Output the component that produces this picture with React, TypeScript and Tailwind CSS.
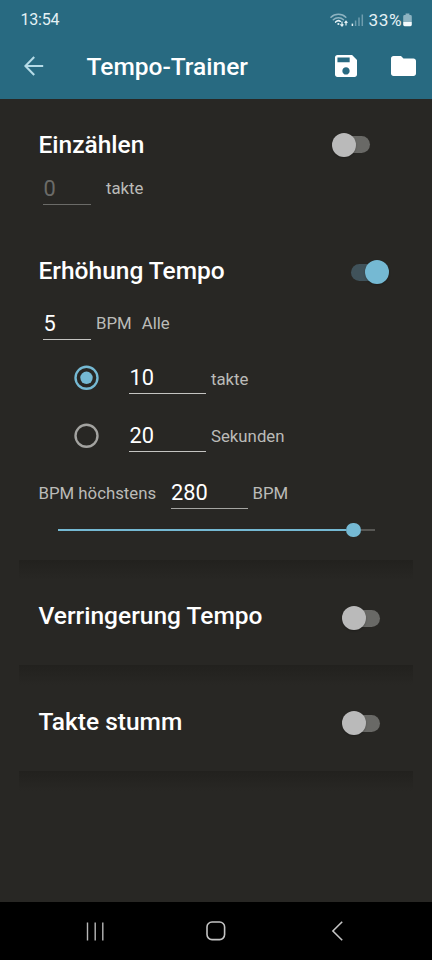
import { useState } from "react";
import { clsx } from "clsx";

function StatusBar(){
    return(
        <div className="flex h-[40px] items-center pl-[20.5px] pr-[20px] text-[#e4f1f5]">
            <span className="text-[16px] leading-5 tracking-[-0.2px]">13:54</span>
            <svg className="ml-auto" width="34" height="14" viewBox="0 0 34 14" fill="none">
                <g stroke="#8db3c1" strokeWidth="1.5" strokeLinecap="round">
                    <path d="M1 4.3C4.8 0.3 12 0.3 15.8 4.3" />
                    <path d="M3.3 6.8C6 4 10.8 4 13.5 6.8" />
                </g>
                <path d="M5.6 9.1C7.2 7.4 9.2 7.5 10.4 8.3" stroke="#e4f1f5" strokeWidth="1.5" strokeLinecap="round" />
                <circle cx="8.4" cy="11" r="1.1" fill="#e4f1f5" />
                <path d="M12 8.6V13M10.4 11.4L12 13L13.4 11.4M16 12.4V8.4M14.6 9.8L16 8.2L17.4 9.8" stroke="#e4f1f5" strokeWidth="1.2" />
                <path d="M22.4 13V10.6" stroke="#e4f1f5" strokeWidth="1.5" />
                <path d="M25.6 13V7.6M29 13V4.6M32.3 13V1.4" stroke="#6f9dae" strokeWidth="1.5" />
            </svg>
            <span className="ml-[4.5px] text-[17.2px] leading-5 tracking-[0.5px]">33%</span>
            <svg className="ml-px" width="9" height="14" viewBox="0 0 9 14">
                <path d="M2.6 0.6H6.4V2H7.4Q8.8 2 8.8 3.4V9H0.2V3.4Q0.2 2 1.6 2H2.6Z" fill="#8db3c1" />
                <path d="M0.2 9H8.8V11.8Q8.8 13.2 7.4 13.2H1.6Q0.2 13.2 0.2 11.8Z" fill="#f4fafc" />
            </svg>
        </div>
    )
}

function AppBar(){
    return(
        <div className="flex h-[59px] items-center pb-[8px] pl-[24px] pr-[16px]">
            <svg width="20" height="20" viewBox="0 0 20 20" fill="none" stroke="#b5dbe7" strokeWidth="2.1">
                <path d="M19.2 10H1.8M10.2 1L1.4 10L10.2 19" />
            </svg>
            <h1 className="ml-[42.5px] pt-[2px] text-[24.5px] font-medium leading-7 text-white">Tempo-Trainer</h1>
            <svg className="ml-auto" width="22" height="22" viewBox="3 3 18 18" fill="#fff">
                <path d="M17 3H5c-1.11 0-2 .9-2 2v14c0 1.1.89 2 2 2h14c1.1 0 2-.9 2-2V7l-4-4zm-5 16c-1.66 0-3-1.34-3-3s1.34-3 3-3 3 1.34 3 3-1.34 3-3 3zm3-10H5V5h10v4z" />
            </svg>
            <svg className="ml-[34px]" width="25" height="20" viewBox="2 4 20 16" fill="#fff">
                <path d="M10 4H4c-1.1 0-1.99.9-1.99 2L2 18c0 1.1.9 2 2 2h16c1.1 0 2-.9 2-2V8c0-1.1-.9-2-2-2h-8l-2-2z" />
            </svg>
        </div>
    )
}

function Toggle({on,onChange,className}:{on:boolean,onChange:()=>void,className?:string}){
    return(
        <button role="switch" aria-checked={on} onClick={onChange} className={clsx("relative flex h-6 w-[38.5px] items-center",on?"justify-end":"justify-start",className)}>
            <span className={clsx("absolute h-[17px] w-[34px] rounded-full",on?"left-0 bg-[#40525a]":"right-0 bg-[#696966]")}></span>
            <span className={clsx("relative size-6 rounded-full shadow-[0_1px_2px_rgba(0,0,0,0.25)]",on?"bg-[#75b9d3]":"bg-[#bababa]")}></span>
        </button>
    )
}

function NumberField({value,className}:{value:string,className:string}){
    return <input defaultValue={value} className={clsx("h-[33px] border-b bg-transparent pl-[0.5px] text-[21.8px] leading-8 outline-none",className)} />
}

function Label({text,className}:{text:string,className?:string}){
    return <span className={clsx("whitespace-nowrap text-[16.8px] leading-5 text-[#bbbbb8]",className)}>{text}</span>
}

function Title({text}:{text:string}){
    return <h2 className="-ml-[0.5px] text-[24.5px] font-medium leading-6 text-white">{text}</h2>
}

function Radio({checked,onSelect}:{checked:boolean,onSelect:()=>void}){
    return(
        <button role="radio" aria-checked={checked} onClick={onSelect} className="size-[25px]">
            <svg width="25" height="25" viewBox="0 0 25 25" fill="none">
                <circle cx="12.5" cy="12.8" r="11" stroke={checked?"#75b9d3":"#a3a3a0"} strokeWidth="2.4" />
                {checked && <circle cx="12.5" cy="12.8" r="6.2" fill="#75b9d3" />}
            </svg>
        </button>
    )
}

// soft band under a card, as wide as the card itself
function CardShadow(){
    return <div className="h-[20px] bg-linear-to-b from-[#22211e] to-[#282724]"></div>
}

export default function App(){
    const [countIn,setCountIn]=useState(false);
    const [increase,setIncrease]=useState(true);
    const [decrease,setDecrease]=useState(false);
    const [mute,setMute]=useState(false);
    const [unit,setUnit]=useState("takte");

    return(
        <div className="flex h-[960px] w-[432px] flex-col overflow-hidden bg-[#282724] font-['Roboto',sans-serif]">
            <header className="h-[99px] bg-[#286a81]">
                <StatusBar />
                <AppBar />
            </header>

            <main className="flex-1 px-[19px]">
                <section className="h-[136px] px-5 pt-[34px]">
                    <div className="flex h-6 items-center justify-between pr-[23px]">
                        <Title text="Einzählen" />
                        <Toggle on={countIn} onChange={()=>setCountIn(!countIn)} className="-mt-px" />
                    </div>
                    <div className="mt-[15px] flex items-center pl-[4px]">
                        <NumberField value="0" className="w-[48px] border-[#6b6b68] text-[#6b6b68]" />
                        <Label text="takte" className="-mt-px ml-[15px]" />
                    </div>
                </section>

                <section className="h-[325px] px-5 pt-[24px]">
                    <div className="flex h-6 items-center justify-between pr-[4px]">
                        <Title text="Erhöhung Tempo" />
                        <Toggle on={increase} onChange={()=>setIncrease(!increase)} className="mt-[2.5px]" />
                    </div>
                    <div className="mt-[24px] flex items-center pl-[4px]">
                        <NumberField value="5" className="w-[48px] border-[#c4c4c2] text-white" />
                        <Label text="BPM" className="-mt-px ml-[5px]" />
                        <Label text="Alle" className="-mt-px ml-[10px]" />
                    </div>
                    <div className="mt-[21px] flex items-center pl-[35px]">
                        <Radio checked={unit==="takte"} onSelect={()=>setUnit("takte")} />
                        <NumberField value="10" className="ml-[30px] w-[77px] border-[#c4c4c2] text-white" />
                        <Label text="takte" className="mt-[2px] ml-[5px]" />
                    </div>
                    <div className="mt-[25px] flex items-center pl-[35px]">
                        <Radio checked={unit==="sekunden"} onSelect={()=>setUnit("sekunden")} />
                        <NumberField value="20" className="ml-[30px] w-[77px] border-[#c4c4c2] text-white" />
                        <Label text="Sekunden" className="mt-px ml-[5px]" />
                    </div>
                    <div className="mt-[24px] flex items-center">
                        <Label text="BPM höchstens" className="-ml-[0.5px] w-[132px]" />
                        <NumberField value="280" className="w-[77px] border-[#a5a5a2] text-white" />
                        <Label text="BPM" className="ml-[5px]" />
                    </div>
                    <div className="mt-[13.5px] flex h-[15px] items-center pl-[18.5px] pr-[18.5px]">
                        <span className="h-[2.5px] flex-1 bg-[#75b9d3]"></span>
                        <span className="size-[14.5px] rounded-full bg-[#75b9d3]"></span>
                        <span className="h-[2px] w-[14px] bg-[#575754]"></span>
                    </div>
                </section>
                <CardShadow />

                <section className="flex h-[85px] justify-between pl-5 pr-[33px] pt-[24px]">
                    <Title text="Verringerung Tempo" />
                    <Toggle on={decrease} onChange={()=>setDecrease(!decrease)} className="mt-[2px]" />
                </section>
                <CardShadow />

                <section className="flex h-[86px] justify-between pl-5 pr-[33px] pt-[25px]">
                    <Title text="Takte stumm" />
                    <Toggle on={mute} onChange={()=>setMute(!mute)} className="mt-px" />
                </section>
                <CardShadow />
            </main>

            <nav className="flex h-[58px] items-center bg-black pl-[86px]">
                <svg width="18" height="19" viewBox="0 0 18 19" stroke="#b8b8b8" strokeWidth="1.4">
                    <path d="M1.5 0.5V18.5M9.2 0.5V18.5M16.8 0.5V18.5" />
                </svg>
                <svg className="ml-[102px]" width="20" height="20" viewBox="0 0 20 20" fill="none" stroke="#c4c4c4" strokeWidth="1.6">
                    <rect x="1" y="1" width="17.6" height="17.6" rx="5" />
                </svg>
                <svg className="ml-[105px]" width="12" height="20" viewBox="0 0 12 20" fill="none" stroke="#c4c4c4" strokeWidth="1.6">
                    <path d="M11.2 0.8L1.9 10L11.2 19.2" />
                </svg>
            </nav>
        </div>
    )
}
